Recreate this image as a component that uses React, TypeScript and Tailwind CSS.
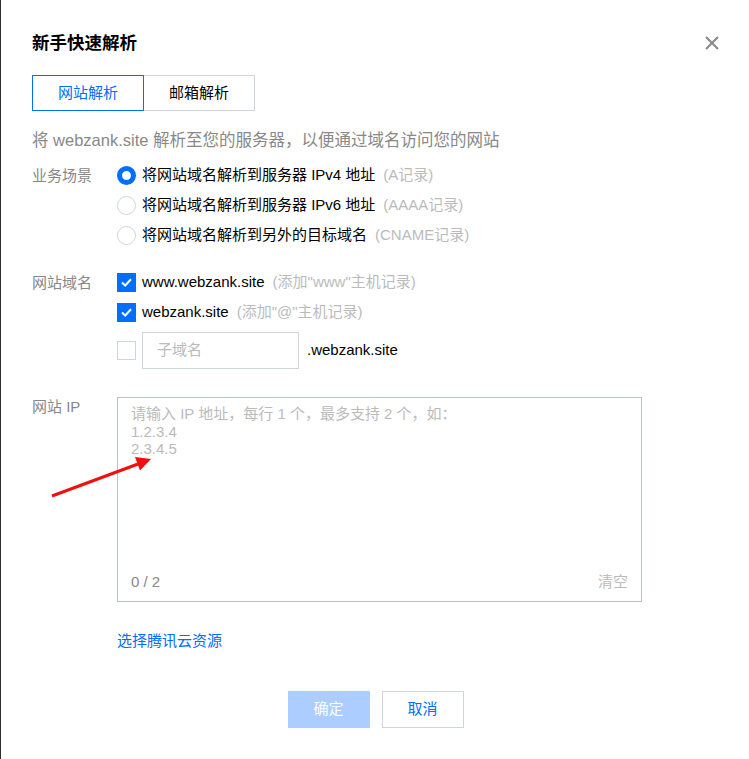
import React from "react";

const font = "font-['Liberation_Sans','Noto_Sans_CJK_SC',sans-serif]";

const scenes = [
  { text: "将网站域名解析到服务器 IPv4 地址", note: "(A记录)", checked: true },
  { text: "将网站域名解析到服务器 IPv6 地址", note: "(AAAA记录)", checked: false },
  { text: "将网站域名解析到另外的目标域名", note: "(CNAME记录)", checked: false },
];

const Radio: React.FC<{ checked: boolean }> = ({ checked }) =>
  checked ? (
    <span className="w-[19px] h-[19px] shrink-0 rounded-full border-[5px] border-[#006eff] bg-white" />
  ) : (
    <span className="w-[19px] h-[19px] shrink-0 rounded-full border border-[#cfd5de] bg-white" />
  );

const Checkbox: React.FC<{ checked: boolean }> = ({ checked }) =>
  checked ? (
    <span className="w-[19px] h-[19px] shrink-0 bg-[#006eff] flex items-center justify-center">
      <svg width="13" height="13" viewBox="0 0 13 13" fill="none">
        <path d="M2 6.5 L5.2 9.5 L11 3.3" stroke="white" strokeWidth="2" />
      </svg>
    </span>
  ) : (
    <span className="w-[19px] h-[19px] shrink-0 border border-[#cfd5de] bg-white" />
  );

export default function App() {
  return (
    <div
      className={`${font} relative w-full h-[759px] bg-white border-l border-[#2e2e2e] pl-[31px] pr-[30px] text-[15px] text-black overflow-hidden`}
    >
      {/* header */}
      <div className="pt-[33px] flex items-center justify-between">
        <h1 className="text-[17.5px] leading-[20px] font-bold">新手快速解析</h1>
        <svg width="14" height="14" viewBox="0 0 14 14">
          <path d="M1 1 L13 13 M13 1 L1 13" stroke="#888" strokeWidth="2" />
        </svg>
      </div>

      {/* tabs */}
      <div className="mt-[22px] flex">
        <div className="w-[112px] h-[36px] border border-[#006eff] text-[#006eff] flex items-center justify-center">
          网站解析
        </div>
        <div className="w-[111px] h-[36px] border border-l-0 border-[#cfd5de] flex items-center justify-center">
          邮箱解析
        </div>
      </div>

      <p className="mt-[19px] text-[16.5px] leading-[20px] text-[#888]">
        将 webzank.site 解析至您的服务器，以便通过域名访问您的网站
      </p>

      {/* scene */}
      <div className="mt-[10px] flex">
        <div className="w-[85px] shrink-0 leading-[31px] text-[#888]">业务场景</div>
        <div className="flex flex-col">
          {scenes.map((s) => (
            <div key={s.note} className="h-[30px] flex items-center gap-[6px]">
              <Radio checked={s.checked} />
              <span>{s.text}</span>
              <span className="ml-[2px] text-[#bbb]">{s.note}</span>
            </div>
          ))}
        </div>
      </div>

      {/* domains */}
      <div className="mt-[17px] flex">
        <div className="w-[85px] shrink-0 leading-[31px] text-[#888]">网站域名</div>
        <div className="flex flex-col">
          <div className="h-[30px] flex items-center gap-[6px]">
            <Checkbox checked />
            <span>www.webzank.site</span>
            <span className="ml-[2px] text-[#bbb]">(添加"www"主机记录)</span>
          </div>
          <div className="h-[30px] flex items-center gap-[6px]">
            <Checkbox checked />
            <span>webzank.site</span>
            <span className="ml-[2px] text-[#bbb]">(添加"@"主机记录)</span>
          </div>
          <div className="mt-[5px] h-[37px] flex items-center">
            <Checkbox checked={false} />
            <div className="ml-[6px] w-[157px] h-[37px] border border-[#cfd5de] pl-[14px] flex items-center text-[#bbb]">
              子域名
            </div>
            <span className="ml-[8px]">.webzank.site</span>
          </div>
        </div>
      </div>

      {/* ip */}
      <div className="mt-[28px] flex">
        <div className="w-[85px] shrink-0 leading-[20px] text-[#888]">网站 IP</div>
        <div className="w-[525px] h-[205px] border border-[#b8c3cf] flex flex-col justify-between pt-[7px] pb-[9px] pl-[13px] pr-[13px] text-[15px]">
          <div className="leading-[17.5px] text-[#bbb]">
            <div>请输入 IP 地址，每行 1 个，最多支持 2 个，如：</div>
            <div>1.2.3.4</div>
            <div>2.3.4.5</div>
          </div>
          <div className="flex justify-between leading-[20px]">
            <span className="text-[#888]">0 / 2</span>
            <span className="text-[#bbb]">清空</span>
          </div>
        </div>
      </div>

      <div className="mt-[29px] pl-[85px] leading-[20px] text-[#006eff]">选择腾讯云资源</div>

      {/* footer */}
      <div className="mt-[40px] flex justify-center gap-[12px]">
        <div className="w-[82px] h-[37px] bg-[#abcdff] text-white flex items-center justify-center">确定</div>
        <div className="w-[82px] h-[37px] border border-[#cfd5de] text-[#006eff] flex items-center justify-center">
          取消
        </div>
      </div>

      {/* annotation arrow */}
      <svg className="absolute left-0 top-0 pointer-events-none" width="749" height="759">
        <line x1="51" y1="496" x2="137" y2="464" stroke="#f01010" strokeWidth="3" />
        <polygon points="150,459 134,457 139,470.5" fill="#f01010" />
      </svg>
    </div>
  );
}
